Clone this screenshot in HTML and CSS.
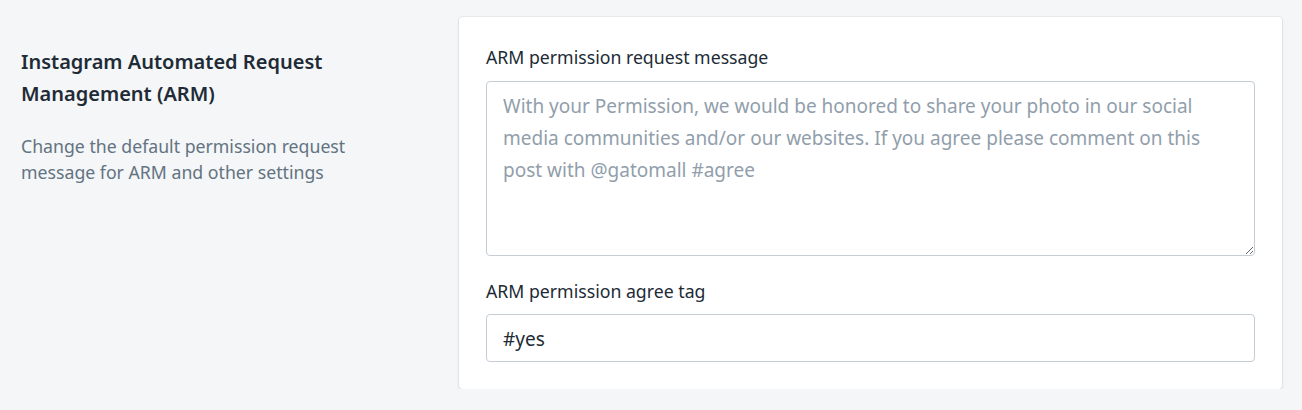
FILE: index.html
```html
<!DOCTYPE html>
<html lang="en">

<head>
    <meta charset="UTF-8">
    <meta name="viewport" content="width=device-width, initial-scale=1.0">
    <title>ARM Settings</title>
    <link rel="stylesheet" href="styles.css">
</head>

<body>
    <div class="layout">
        <div class="annotation">
            <h2 class="annotation-title">Instagram Automated Request Management (ARM)</h2>
            <p class="annotation-desc">Change the default permission request message for ARM and other settings</p>
        </div>
        <div class="card">
            <div class="field">
                <label for="arm-message">ARM permission request message</label>
                <textarea id="arm-message" rows="5" placeholder="With your Permission, we would be honored to share your photo in our social media communities and/or our websites. If you agree please comment on this post with @gatomall #agree"></textarea>
            </div>
            <div class="field">
                <label for="arm-tag">ARM permission agree tag</label>
                <input type="text" id="arm-tag" value="#yes">
            </div>
        </div>
    </div>
</body>

</html>
```
FILE: styles.css
```css
body {
    font-family: "Noto Sans", "Open Sans", sans-serif;
    margin: 0;
    padding: 0;
    background: #f4f6f8;
    color: #212b36;
}

.layout {
    display: flex;
    padding: 17px 20px 0 21px;
}

.annotation {
    width: 438px;
    flex-shrink: 0;
    padding-top: 29px;
}

.annotation-title {
    margin: 0;
    font-size: 20px;
    line-height: 32px;
    font-weight: 600;
    max-width: 380px;
}

.annotation-desc {
    margin: 23px 0 0;
    font-size: 17.7px;
    line-height: 26px;
    color: #637381;
    max-width: 350px;
}

.card {
    flex: 1;
    background: #fff;
    border-radius: 4px;
    box-shadow: 0 0 0 1px rgba(63, 63, 68, 0.05), 0 1px 3px 0 rgba(63, 63, 68, 0.15);
    padding: 27px;
}

.field + .field {
    margin-top: 22px;
}

.field label {
    display: block;
    font-size: 17.7px;
    line-height: 26.67px;
    margin-bottom: 10px;
}

.field textarea,
.field input {
    display: block;
    box-sizing: border-box;
    width: 100%;
    margin: 0;
    font-family: inherit;
    font-size: 19px;
    line-height: 32px;
    color: #212b36;
    background: #fff;
    border: 1px solid #c4cdd5;
    border-radius: 4px;
    outline: none;
}

.field textarea {
    height: 175px;
    padding: 8.67px 16px 4.67px;
    resize: vertical;
}

.field input {
    height: 48px;
    padding: 8px 16px 6px;
}

.field textarea::placeholder {
    color: #919eab;
}
```
